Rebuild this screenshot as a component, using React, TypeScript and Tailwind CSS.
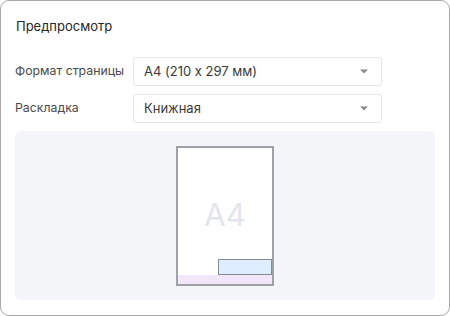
const font = { fontFamily: "Inter, 'Noto Sans', sans-serif" };

function Caret() {
  return (
    <svg width="8" height="5" viewBox="0 0 8 5" className="text-[#8c8c8c]">
      <path d="M0 0.5h8L4 4.5z" fill="currentColor" />
    </svg>
  );
}

function SelectRow({ label, value }: { label: string; value: string }) {
  return (
    <div className="flex items-center">
      <div className="w-[118px] text-[12.3px] text-[#4a4a4a]">{label}</div>
      <button className="flex h-[29px] w-[249px] items-center justify-between rounded-[3px] border border-[#e6e7ea] bg-white pl-[10px] pr-[13px] text-left text-[13px] text-[#3a3a3a]">
        <span>{value}</span>
        <Caret />
      </button>
    </div>
  );
}

export default function App() {
  return (
    <div className="h-[316px] w-[450px] bg-white [font-feature-settings:'calt'_0]" style={font}>
      <div className="flex h-full flex-col rounded-[9px] border border-[#a9a9a9] bg-white px-[14px] pb-[15px] pt-[16px]">
        <h2 className="pl-[1px] text-[13px] leading-[18px] text-[#262626]">Предпросмотр</h2>

        <div className="mt-[22px] flex flex-col gap-[8px]">
          <SelectRow label="Формат страницы" value="A4 (210 x 297 мм)" />
          <SelectRow label="Раскладка" value="Книжная" />
        </div>

        <div className="mt-[8px] flex flex-1 items-center justify-center rounded-[6px] bg-[#f4f5f9]">
          <div className="relative flex h-[140px] w-[98px] flex-col justify-end border-2 border-[#9da2a7] bg-white">
            <div className="absolute inset-0 flex items-center justify-center text-[31px] text-[#e3e5eb]">
              A4
            </div>
            <div className="relative h-[16px] w-[54px] self-end border border-[#858b91] bg-[#deedff]" />
            <div className="h-[9px] bg-[#f3e6fb]" />
          </div>
        </div>
      </div>
    </div>
  );
}
